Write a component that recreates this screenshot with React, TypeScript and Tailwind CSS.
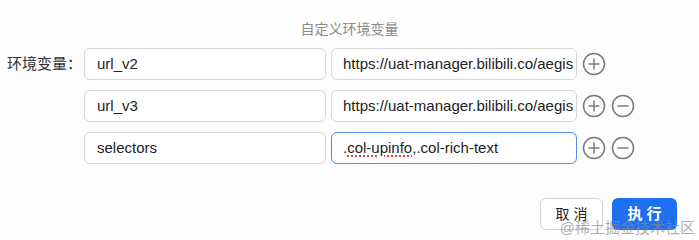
import React from 'react'

const FONT = { fontFamily: '"Liberation Sans", "Noto Sans CJK SC", sans-serif' }

const rows = [
  { key: 'url_v2', value: 'https://uat-manager.bilibili.co/aegis', removable: false, focused: false },
  { key: 'url_v3', value: 'https://uat-manager.bilibili.co/aegis', removable: true, focused: false },
  { key: 'selectors', value: '', removable: true, focused: true },
]

function CircleIcon({ minus }: { minus?: boolean }) {
  return (
    <svg width="24" height="24" viewBox="0 0 24 24" className="shrink-0">
      <circle cx="12" cy="12" r="10.5" fill="none" stroke="#7a7a7a" strokeWidth="1.5" />
      <line x1="6.5" y1="12" x2="17.5" y2="12" stroke="#7a7a7a" strokeWidth="1.5" />
      {!minus && <line x1="12" y1="6.5" x2="12" y2="17.5" stroke="#7a7a7a" strokeWidth="1.5" />}
    </svg>
  )
}

export default function App() {
  return (
    <div className="relative w-[699px] h-[240px] bg-[#fdfdfd] overflow-hidden text-[#222]" style={FONT}>
      <div className="pt-[19px] text-center text-[14px] leading-[20px] text-[#8c8c8c]">自定义环境变量</div>
      <div className="mt-[9px] flex flex-col gap-[10px]">
        {rows.map((r, i) => (
          <div key={r.key} className="flex items-center">
            <div className="w-[84px] pr-[2px] text-right text-[15px] text-[#333] whitespace-nowrap">{i === 0 ? '环境变量：' : ''}</div>
            <div className="w-[242px] h-[32px] flex items-center px-[12px] rounded-[6px] border border-[#d6d6d6] bg-white text-[15px]">
              {r.key}
            </div>
            <div
              className={
                r.focused
                  ? 'ml-[5px] w-[246px] h-[32px] flex items-center pl-[11px] rounded-[6px] border border-[#4a8fe0] bg-white text-[15px] whitespace-nowrap overflow-hidden'
                  : 'ml-[5px] w-[246px] h-[32px] flex items-center pl-[11px] rounded-[6px] border border-[#d6d6d6] bg-white text-[15px] whitespace-nowrap overflow-hidden'
              }
            >
              {r.focused ? (
                <span>
                  .<span className="underline decoration-dotted decoration-[#e0405a] decoration-2 underline-offset-[3px]">col-upinfo</span>,.col-rich-text
                </span>
              ) : (
                r.value
              )}
            </div>
            <div className="ml-[5px] flex items-center gap-[5px]">
              <CircleIcon />
              {r.removable && <CircleIcon minus />}
            </div>
          </div>
        ))}
      </div>
      <div className="mt-[34px] pr-[22px] flex justify-end gap-[9px]">
        <button className="w-[63px] h-[32px] rounded-[6px] border border-[#d3d3d3] bg-white text-[14px] text-[#222] tracking-[4px] pl-[4px]">
          取消
        </button>
        <button className="w-[65px] h-[32px] rounded-[6px] bg-[#1f6ff2] text-[15px] font-bold text-white tracking-[4px] pl-[4px]">
          执行
        </button>
      </div>
      <div className="absolute right-[4px] bottom-[3px] text-[15px] leading-[18px] text-[#8a8a8a]/70 pointer-events-none">
        @稀土掘金技术社区
      </div>
    </div>
  )
}
